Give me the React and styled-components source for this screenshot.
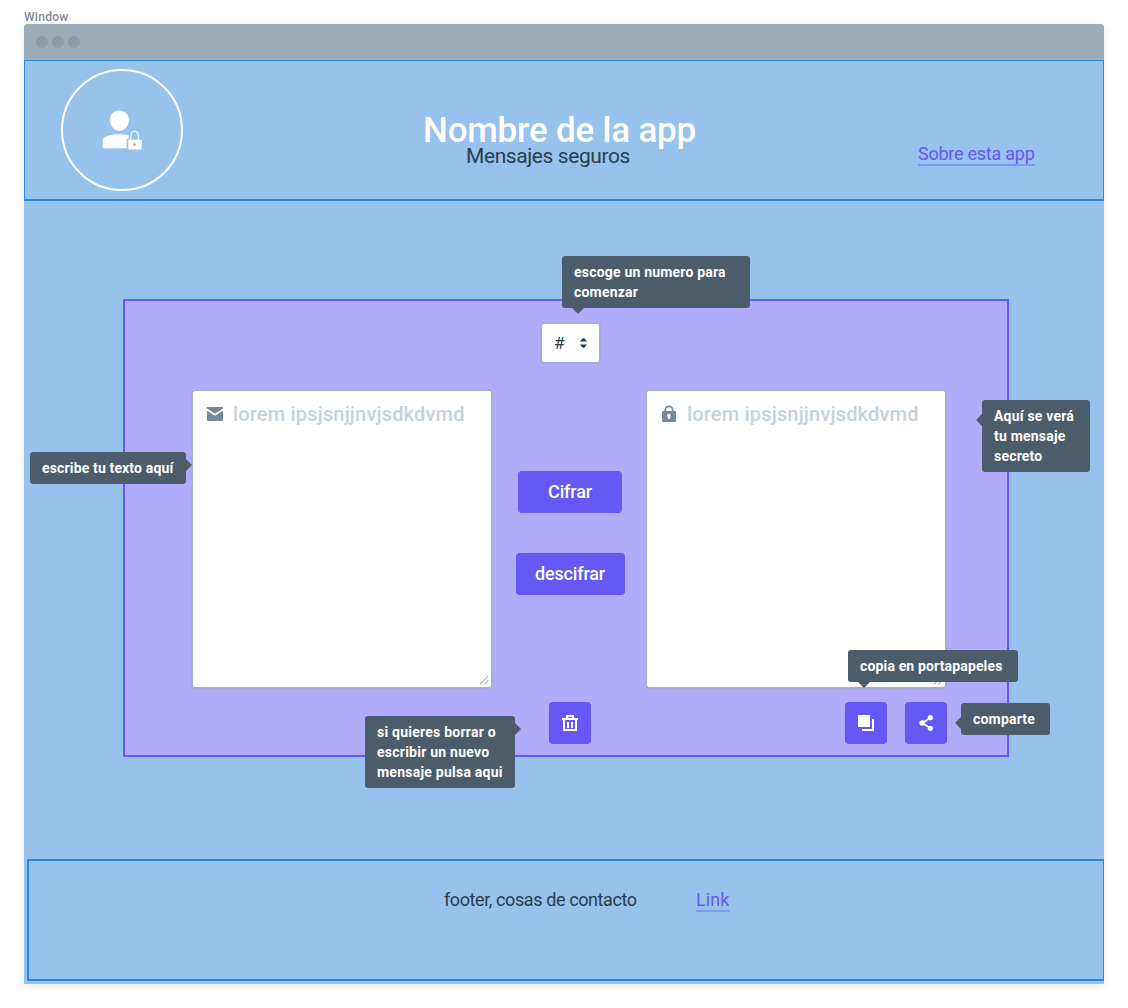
import React from "react";
import styled, { createGlobalStyle, css } from "styled-components";

const color = {
  sky: "#96c2eb",
  blue: "#2b88dc",
  violet: "#6558f5",
  lilac: "#b2abfa",
  slate: "#4b5c6b",
  ink: "#2b3d4b",
  bar: "#9dacb9",
  dot: "#8c9cab",
  fieldBorder: "#a3add6",
  icon: "#778899",
};

const Global = createGlobalStyle`
  *, *::before, *::after { box-sizing: border-box; }
  body { margin: 0; background: #fff; color: ${color.ink}; font-family: Roboto, "Liberation Sans", sans-serif; }
  h1, p { margin: 0; font-weight: inherit; }
`;

const Board = styled.div`
  width: 1128px;
  height: 1008px;
  padding: 10px 24px 24px;
`;

const BoardLabel = styled.div`
  height: 14px;
  font-size: 12px;
  line-height: 15px;
  font-weight: 500;
  letter-spacing: 0.3px;
  color: #7c8c9a;
`;

const Window = styled.div`
  position: relative;
  display: flex;
  flex-direction: column;
  height: 960px;
  background: ${color.sky};
  border-radius: 4px 4px 0 0;
  box-shadow: 0 2px 10px rgba(0, 0, 0, 0.09);
`;

const TitleBar = styled.div`
  display: flex;
  align-items: center;
  gap: 4px;
  height: 36px;
  padding-left: 12px;
  background: ${color.bar};
  border-radius: 4px 4px 0 0;
`;

const Dot = styled.span`
  width: 12px;
  height: 12px;
  border-radius: 50%;
  background: ${color.dot};
`;

const Header = styled.header`
  display: flex;
  height: 141px;
  padding: 8px 36px;
  border: solid ${color.blue};
  border-width: 1px 1px 2px;
`;

const Avatar = styled.div`
  flex: none;
  width: 122px;
  height: 122px;
  border: 2px solid #fff;
  border-radius: 50%;
`;

const Titles = styled.div`
  flex: none;
  width: 280px;
  margin: 42px 0 0 240px;
  white-space: nowrap;
`;

const AppName = styled.h1`
  font-size: 35px;
  line-height: 40px;
  font-weight: 500;
  letter-spacing: -0.2px;
  color: #fff;
`;

const Tagline = styled.p`
  margin: -7px 0 0 43px;
  font-size: 21px;
  line-height: 24px;
  letter-spacing: -0.42px;
`;

const TextLink = styled.a`
  display: block;
  height: 22px;
  font-size: 18px;
  line-height: 20px;
  letter-spacing: ${(p) => p.$track};
  white-space: nowrap;
  color: ${color.violet};
  border-bottom: 2px solid rgba(101, 88, 245, 0.4);
`;

const HeaderLink = styled(TextLink)`
  width: 117px;
  margin: 75px 0 0 215px;
`;

const Main = styled.main`
  flex: 1;
  padding: 98px 95px 0 99px;
`;

const Panel = styled.section`
  height: 458px;
  padding: 21px 60px 0 66px;
  background: ${color.lilac};
  border: 2px solid ${color.violet};
`;

const Columns = styled.div`
  display: grid;
  grid-template-columns: 302px 152px 302px;
  margin-top: ${(p) => p.$top}px;
`;

const Middle = styled.div`
  display: flex;
  flex-direction: column;
  align-items: center;
  padding: ${(p) => p.$top}px 0 0 2px;
`;

const NumberSelect = styled.div`
  display: flex;
  align-items: center;
  justify-content: space-between;
  width: 61px;
  height: 42px;
  margin-left: 1px;
  padding: 0 12px 0 12px;
  background: #fff;
  border: 2px solid ${color.fieldBorder};
  border-radius: 4px;
  font-size: 17px;
  line-height: 20px;
`;

const Field = styled.div`
  position: relative;
  display: flex;
  align-items: flex-start;
  gap: 8px;
  height: 300px;
  padding: 11px 12px;
  background: #fff;
  border: 2px solid ${color.fieldBorder};
  border-radius: 4px;
`;

const Placeholder = styled.span`
  font-size: 20px;
  line-height: 24px;
  font-weight: 500;
  letter-spacing: 0.18px;
  white-space: nowrap;
  color: #c5d1db;
`;

const Grip = styled.svg`
  position: absolute;
  right: 1px;
  bottom: 1px;
`;

const buttonBase = css`
  display: flex;
  align-items: center;
  justify-content: center;
  height: 42px;
  padding: 0;
  border: 0;
  border-radius: 4px;
  background: ${color.violet};
  color: #fff;
`;

const Button = styled.button`
  ${buttonBase}
  width: ${(p) => p.$width}px;
  margin-bottom: 40px;
  font: 500 18px/24px Roboto, "Liberation Sans", sans-serif;
  letter-spacing: -0.15px;
`;

const IconButton = styled.button`
  ${buttonBase}
  width: 42px;
`;

const Actions = styled.div`
  display: flex;
  justify-content: flex-end;
  gap: 18px;
`;

const Footer = styled.footer`
  display: flex;
  height: 122px;
  margin: 0 0 3px 3px;
  padding: 29px 0 0 415px;
  border: solid ${color.blue};
  border-width: 2px 1px 2px 2px;
`;

const FooterText = styled.p`
  width: 252px;
  font-size: 18px;
  line-height: 20px;
  letter-spacing: -0.4px;
  white-space: nowrap;
`;

const arrows = {
  bottom: css`bottom: -6px; left: ${(p) => p.$at}px; border-width: 6px 6px 0; border-top-color: ${color.slate};`,
  right: css`right: -6px; top: ${(p) => p.$at}px; border-width: 6px 0 6px 6px; border-left-color: ${color.slate};`,
  left: css`left: -6px; top: ${(p) => p.$at}px; border-width: 6px 6px 6px 0; border-right-color: ${color.slate};`,
};

const Tip = styled.div`
  position: absolute;
  left: ${(p) => p.$x}px;
  top: ${(p) => p.$y}px;
  width: ${(p) => p.$w}px;
  padding: 6px 0 6px 12px;
  border-radius: 3px;
  background: ${color.slate};
  color: #fff;
  font-size: 14px;
  line-height: 20px;
  font-weight: 700;
  letter-spacing: ${(p) => p.$track || "0.2px"};
  white-space: pre-line;

  &::after {
    content: "";
    position: absolute;
    border: solid transparent;
    ${(p) => arrows[p.$side]}
  }
`;

const UserLockIcon = () => (
  <svg width="118" height="118" viewBox="63 71 118 118">
    <g fill="#fff">
      <path d="M119.4 110.6c5.4 0 9.5 4 9.5 9.5 0 5.800-4.300 10.800-9.500 10.800s-9.500-5-9.500-10.800c0-5.500 4.100-9.500 9.500-9.500z" />
      <path d="M102.600 148.300v-7.300c0-4.500 7-6.800 16.500-6.800 3.700 0 7 .3 9.700.9v3.600h-2.200v9.600z" />
      <path d="M128.300 139.700h2v-3.700c0-3 1.800-5.200 4.300-5.200s4.300 2.200 4.300 5.200v3.700h2.800v9.900h-13.400zM131.300 139.700h6.600v-3.700c0-2.500-1.300-4.200-3.300-4.200s-3.300 1.700-3.300 4.200z" fillRule="evenodd" />
    </g>
    <circle cx="134.500" cy="144.500" r="1.500" fill={color.sky} />
  </svg>
);

const MailIcon = () => (
  <svg width="20" height="24" viewBox="0 0 20 24" fill={color.icon}>
    <path d="M2 5h16v1.600l-8 5.100-8-5.100zM2 8.700l8 5.100 8-5.100V18a1 1 0 0 1-1 1H3a1 1 0 0 1-1-1z" />
  </svg>
);

const LockIcon = () => (
  <svg width="20" height="24" viewBox="0 0 20 24" fill={color.icon}>
    <path fillRule="evenodd" d="M5.500 9V8a4.500 4.500 0 0 1 9 0v1H16a1 1 0 0 1 1 1v9a1 1 0 0 1-1 1H4a1 1 0 0 1-1-1v-9a1 1 0 0 1 1-1zM7.200 9h5.600V8a2.800 2.800 0 0 0-5.600 0zM10 11.800a1.900 1.900 0 0 0-1.100 3.400V17h2.200v-1.800A1.900 1.900 0 0 0 10 11.800z" />
  </svg>
);

const SortIcon = () => (
  <svg width="7" height="12" viewBox="0 0 7 12" fill={color.ink}>
    <path d="M.3 4.500V4L2.700 1.200h1.600L6.700 4v.5zM.3 7.500V8l2.400 2.800h1.600L6.700 8v-.5z" />
  </svg>
);

const TrashIcon = () => (
  <svg width="18" height="18" viewBox="0 0 18 18" fill="#fff">
    <path fillRule="evenodd" d="M5 1h8v3h4v2h-1v11H2V6H1V4h4zM7 3v1h4V3zM4 6v9h10V6z" />
    <path d="M6 8h2v6H6zM10 8h2v6h-2z" />
  </svg>
);

const CopyIcon = () => (
  <svg width="18" height="18" viewBox="0 0 18 18" fill="#fff">
    <rect x="1" y="1" width="12" height="12" rx=".5" />
    <path d="M15 5h2v12H5v-2h10z" />
  </svg>
);

const ShareIcon = () => (
  <svg width="18" height="18" viewBox="0 0 18 18" fill="#fff">
    <path d="M13 4 5.300 9l7.700 5" fill="none" stroke="#fff" strokeWidth="1.800" />
    <circle cx="13.300" cy="3.700" r="2.600" />
    <circle cx="5.200" cy="9" r="2.800" />
    <circle cx="13.300" cy="14.300" r="2.600" />
  </svg>
);

const ResizeGrip = () => (
  <Grip width="11" height="11" viewBox="0 0 11 11" fill="none" stroke="#b0bdcb" strokeWidth="1.200">
    <path d="M1 9.500l8-8.500M5.200 9.500l4-4.300" />
  </Grip>
);

const tips = [
  { text: "escoge un numero para\ncomenzar", x: 538, y: 232, w: 188, side: "bottom", at: 10 },
  { text: "escribe tu texto aquí", x: 6, y: 428, w: 156, side: "right", at: 7, track: "0.15px" },
  { text: "Aquí se verá\ntu mensaje\nsecreto", x: 958, y: 376, w: 108, side: "left", at: 14 },
  { text: "copia en portapapeles", x: 824, y: 626, w: 170, side: "bottom", at: 10, track: "0.15px" },
  { text: "comparte", x: 937, y: 679, w: 89, side: "left", at: 14 },
  { text: "si quieres borrar o\nescribir un nuevo\nmensaje pulsa aqui", x: 341, y: 692, w: 150, side: "right", at: 7, track: "0.24px" },
];

export default function App() {
  return (
    <>
      <Global />
      <Board>
        <BoardLabel>Window</BoardLabel>
        <Window>
          <TitleBar>
            <Dot />
            <Dot />
            <Dot />
          </TitleBar>
          <Header>
            <Avatar>
              <UserLockIcon />
            </Avatar>
            <Titles>
              <AppName>Nombre de la app</AppName>
              <Tagline>Mensajes seguros</Tagline>
            </Titles>
            <HeaderLink $track="-0.25px">Sobre esta app</HeaderLink>
          </Header>
          <Main>
            <Panel>
              <Middle $top={0}>
                <NumberSelect>
                  <span>#</span>
                  <SortIcon />
                </NumberSelect>
              </Middle>
              <Columns $top={25}>
                <Field>
                  <MailIcon />
                  <Placeholder>lorem ipsjsnjjnvjsdkdvmd</Placeholder>
                  <ResizeGrip />
                </Field>
                <Middle $top={82}>
                  <Button $width={104}>Cifrar</Button>
                  <Button $width={109}>descifrar</Button>
                </Middle>
                <Field>
                  <LockIcon />
                  <Placeholder>lorem ipsjsnjjnvjsdkdvmd</Placeholder>
                  <ResizeGrip />
                </Field>
              </Columns>
              <Columns $top={13}>
                <span />
                <Middle $top={0}>
                  <IconButton aria-label="borrar">
                    <TrashIcon />
                  </IconButton>
                </Middle>
                <Actions>
                  <IconButton aria-label="copiar">
                    <CopyIcon />
                  </IconButton>
                  <IconButton aria-label="compartir">
                    <ShareIcon />
                  </IconButton>
                </Actions>
              </Columns>
            </Panel>
          </Main>
          <Footer>
            <FooterText>footer, cosas de contacto</FooterText>
            <TextLink $track="0.1px">Link</TextLink>
          </Footer>
          {tips.map((t) => (
            <Tip key={t.text} $x={t.x} $y={t.y} $w={t.w} $side={t.side} $at={t.at} $track={t.track}>
              {t.text}
            </Tip>
          ))}
        </Window>
      </Board>
    </>
  );
}
